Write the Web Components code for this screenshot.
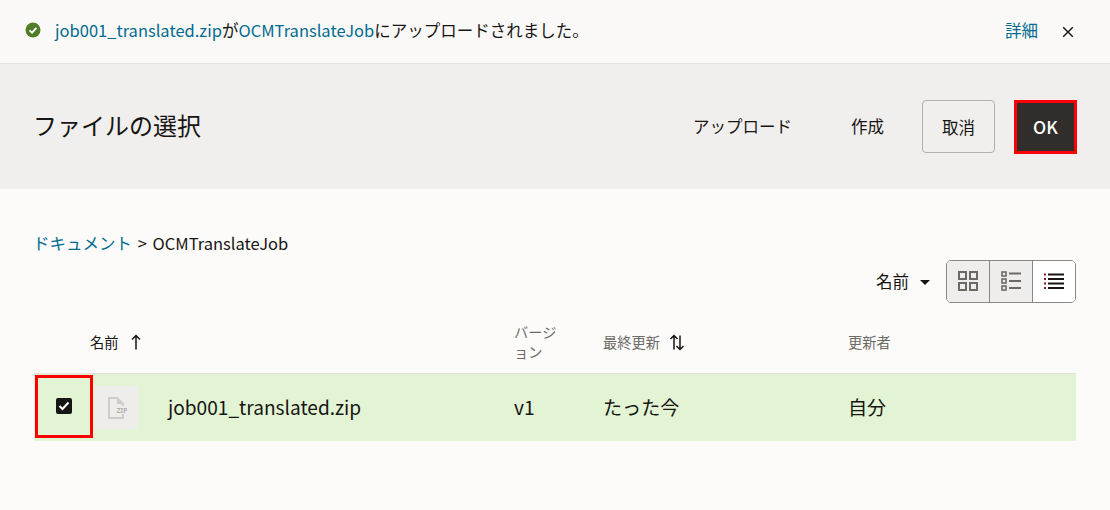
<!DOCTYPE html>
<html lang="ja">
<head>
<meta charset="utf-8">
<title>ファイルの選択</title>
<style>
  html, body { margin: 0; height: 100%; }
  body {
    width: 1110px;
    height: 510px;
    overflow: hidden;
    background: #fcfbfa;
    color: #161513;
    font-family: "Noto Sans CJK JP", "Noto Sans", sans-serif;
  }
</style>
</head>
<body>
<upload-banner>
  <a slot="file">job001_translated.zip</a>
  <a slot="folder">OCMTranslateJob</a>
</upload-banner>
<picker-header heading="ファイルの選択"></picker-header>
<picker-crumbs></picker-crumbs>
<picker-toolbar></picker-toolbar>
<file-table></file-table>

<script>
class UploadBanner extends HTMLElement {
  constructor() {
    super();
    this.attachShadow({ mode: "open" });
    this.shadowRoot.innerHTML = `
      <style>
        :host {
          display: flex;
          align-items: center;
          box-sizing: border-box;
          height: 64px;
          padding: 0 35px 3px 25px;
          background: #fbf9f8;
          border-bottom: 1px solid #e4e1dd;
          font-size: 16.5px;
        }
        svg { flex: none; display: block; }
        .msg { margin-left: 14px; flex: 1; white-space: nowrap; }
        ::slotted(a), .link { color: #006b8f; }
        .close { margin-left: 23px; margin-top: 3px; }
      </style>
      <svg width="16" height="16" viewBox="0 0 16 16">
        <circle cx="8" cy="8" r="7.5" fill="#4f7d28"/>
        <path d="M4.600 8.300l2.400 2.300 4.400-4.800" fill="none" stroke="#fff" stroke-width="1.8"/>
      </svg>
      <div class="msg"><slot name="file"></slot>が<slot name="folder"></slot>にアップロードされました。</div>
      <span class="link">詳細</span>
      <svg class="close" width="14" height="14" viewBox="0 0 14 14">
        <path d="M2.200 2.200l9.600 9.600M11.800 2.200l-9.600 9.600" fill="none" stroke="#161513" stroke-width="1.4"/>
      </svg>`;
  }
}
customElements.define("upload-banner", UploadBanner);

class PickerHeader extends HTMLElement {
  constructor() {
    super();
    this.attachShadow({ mode: "open" });
    this.shadowRoot.innerHTML = `
      <style>
        :host {
          display: flex;
          align-items: center;
          box-sizing: border-box;
          height: 125px;
          padding: 0 33px;
          background: #f1efed;
        }
        h1 {
          flex: 1;
          margin: -5px 0 0;
          font: 400 24px "Liberation Serif", "Noto Sans CJK JP", serif;
        }
        .text { font-size: 16.5px; margin-top: -1px; }
        .upload { margin-right: 59px; }
        .create { margin-right: 38px; }
        .cancel, .ok {
          display: flex;
          align-items: center;
          justify-content: center;
          box-sizing: border-box;
          font-size: 16.5px;
        }
        .cancel {
          width: 73px;
          height: 53px;
          margin-right: 19px;
          border: 1px solid #b3b0ac;
          border-radius: 4px;
        }
        .ok {
          width: 63px;
          height: 54px;
          margin-top: 1px;
          padding-bottom: 2px;
          background: #312d2a;
          border: 3px solid #f00;
          color: #fff;
          font-size: 17.5px;
          font-weight: 500;
        }
      </style>
      <h1></h1>
      <span class="text upload">アップロード</span>
      <span class="text create">作成</span>
      <div class="cancel">取消</div>
      <div class="ok">OK</div>`;
    this.shadowRoot.querySelector("h1").textContent = this.getAttribute("heading");
  }
}
customElements.define("picker-header", PickerHeader);

class PickerCrumbs extends HTMLElement {
  constructor() {
    super();
    this.attachShadow({ mode: "open" });
    this.shadowRoot.innerHTML = `
      <style>
        :host {
          display: block;
          padding: 42px 33px 0;
          font-size: 16.5px;
          line-height: 24px;
        }
        a { color: #006b8f; }
        span { margin: 0 2px; }
      </style>
      <a>ドキュメント</a> <span>&gt;</span> OCMTranslateJob`;
  }
}
customElements.define("picker-crumbs", PickerCrumbs);

class PickerToolbar extends HTMLElement {
  constructor() {
    super();
    this.attachShadow({ mode: "open" });
    this.shadowRoot.innerHTML = `
      <style>
        :host {
          display: flex;
          align-items: center;
          justify-content: flex-end;
          height: 42px;
          margin-top: 5px;
          padding: 0 34px;
          font-size: 16.5px;
        }
        .caret {
          width: 0;
          height: 0;
          margin: 2px 16px 0 11px;
          border: 5px solid transparent;
          border-top: 5px solid #161513;
          border-bottom: 0;
        }
        .views {
          display: flex;
          flex: none;
          box-sizing: border-box;
          height: 43px;
          border: 1px solid #8a8784;
          border-radius: 5px;
          overflow: hidden;
        }
        .views div {
          display: flex;
          align-items: center;
          justify-content: center;
          box-sizing: border-box;
          width: 43px;
          background: #efedec;
          border-left: 1px solid #8a8784;
          color: #6d6a66;
        }
        .views div:first-child { width: 42px; border-left: 0; }
        .views div.on { background: #fff; color: #161513; }
      </style>
      <span>名前</span>
      <span class="caret"></span>
      <div class="views">
        <div>
          <svg width="20" height="20" viewBox="0 0 20 20" fill="none" stroke="currentColor" stroke-width="2">
            <rect x="1" y="1" width="7" height="7"/><rect x="12" y="1" width="7" height="7"/>
            <rect x="1" y="12" width="7" height="7"/><rect x="12" y="12" width="7" height="7"/>
          </svg>
        </div>
        <div>
          <svg width="20" height="20" viewBox="0 0 20 20" fill="none" stroke="currentColor" stroke-width="1.6">
            <rect x="1" y="1" width="4" height="4"/><rect x="1" y="8" width="4" height="4"/><rect x="1" y="15" width="4" height="4"/>
            <path d="M8 2.500h12M8 10h12M8 17h12" stroke-width="2"/>
          </svg>
        </div>
        <div class="on">
          <svg width="20" height="16" viewBox="0 0 20 16" fill="none" stroke="currentColor" stroke-width="2">
            <path d="M4 1.500h16M4 6h16M4 10.500h16M4 15h16"/>
            <path d="M0 1.500h2M0 6h2M0 10.500h2M0 15h2" stroke="#8c1c13"/>
          </svg>
        </div>
      </div>`;
  }
}
customElements.define("picker-toolbar", PickerToolbar);

class FileTable extends HTMLElement {
  constructor() {
    super();
    this.attachShadow({ mode: "open" });
    this.shadowRoot.innerHTML = `
      <style>
        :host {
          display: block;
          margin: 19px 34px 0;
        }
        .row {
          display: grid;
          grid-template-columns: 56px 424px 89px 245px 1fr;
          align-items: center;
        }
        .head {
          height: 53px;
          padding-bottom: 10px;
          font-size: 14.25px;
          color: #6d6a66;
          border-bottom: 1px solid #e4e1dd;
          box-sizing: border-box;
          line-height: 20px;
        }
        .head .name {
          grid-column: 2;
          display: flex;
          align-items: center;
          color: #161513;
        }
        .head svg { display: block; color: #161513; }
        .head .name svg { margin-left: 11px; }
        .head .sort { display: flex; align-items: center; }
        .head .sort svg { margin-left: 9px; }
        .head .ver { width: 46px; }
        .body {
          height: 67px;
          background: #e3f4d4;
          font-size: 19.1px;
        }
        .body .cell, .file span { padding-bottom: 2px; }
        .check {
          box-sizing: border-box;
          display: flex;
          align-items: center;
          justify-content: center;
          align-self: start;
          width: 58px;
          height: 63px;
          margin: 1px 0 0 1px;
          border: 3px solid #f00;
        }
        .box {
          width: 16px;
          height: 16px;
          background: #161513;
          border-radius: 2px;
          display: flex;
          align-items: center;
          justify-content: center;
          margin-top: -2px;
        }
        .file { display: flex; align-items: center; }
        .thumb {
          display: flex;
          align-items: center;
          justify-content: center;
          width: 43px;
          height: 43px;
          margin-left: 5px;
          background: #efedec;
        }
        .file span { margin-left: 30px; }
      </style>
      <div class="row head">
        <div class="name">名前
          <svg width="12" height="16" viewBox="0 0 12 16" fill="none" stroke="currentColor" stroke-width="1.5">
            <path d="M6 15.500V1.500M2 5.500L6 1.500 10 5.500"/>
          </svg>
        </div>
        <div class="ver">バージョン</div>
        <div class="sort">最終更新
          <svg width="16" height="17" viewBox="0 0 16 17" fill="none" stroke="currentColor" stroke-width="1.5">
            <path d="M5 15.500V1.500M1.500 5L5 1.500 8.500 5M11 1.500v14M7.500 12l3.500 3.500 3.500-3.500"/>
          </svg>
        </div>
        <div>更新者</div>
      </div>
      <div class="row body">
        <div class="check">
          <div class="box">
            <svg width="12" height="10" viewBox="0 0 12 10"><path d="M1.500 5l3 3L10.500 1.500" fill="none" stroke="#fff" stroke-width="2"/></svg>
          </div>
        </div>
        <div class="file">
          <div class="thumb">
            <svg width="20" height="22" viewBox="0 0 20 22">
              <path d="M2 1h8l6 6v14H2z" fill="none" stroke="#cfccc8" stroke-width="2"/>
              <path d="M10 1v6h6z" fill="#cfccc8"/>
              <rect x="8" y="9" width="12" height="8" fill="#efedec"/>
              <text x="9.500" y="16" font-size="7" font-weight="700" fill="#b3b0ac" font-family="Noto Sans">ZIP</text>
            </svg>
          </div>
          <span>job001_translated.zip</span>
        </div>
        <div class="cell">v1</div>
        <div class="cell">たった今</div>
        <div class="cell">自分</div>
      </div>`;
  }
}
customElements.define("file-table", FileTable);
</script>
</body>
</html>
